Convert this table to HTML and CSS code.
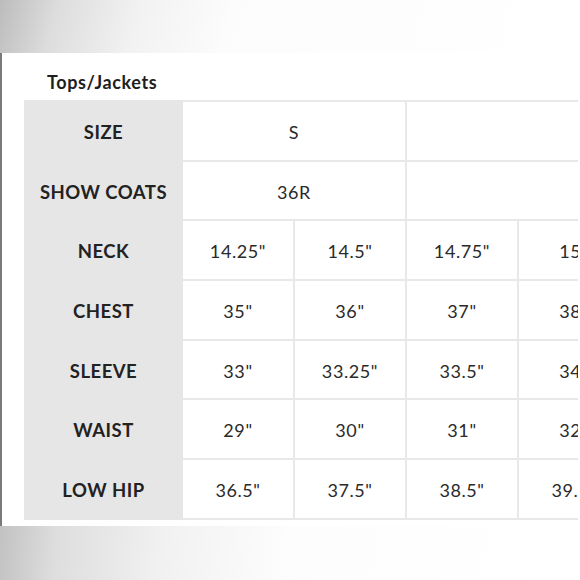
FILE: index.html
```html
<!DOCTYPE html>
<html>
<head>
<meta charset="utf-8">
<link rel="stylesheet" href="styles.css">
</head>
<body>
<div class="band band-top"></div>
<div class="panel">
  <h2 class="title">Tops/Jackets</h2>
  <div class="clip">
    <table class="chart">
      <colgroup>
        <col class="c-label"><col class="c-val"><col class="c-val"><col class="c-val"><col class="c-val">
      </colgroup>
      <tr><th>SIZE</th><td colspan="2">S</td><td colspan="2"></td></tr>
      <tr><th>SHOW COATS</th><td colspan="2">36R</td><td colspan="2"></td></tr>
      <tr><th>NECK</th><td>14.25"</td><td>14.5"</td><td>14.75"</td><td>15"</td></tr>
      <tr><th>CHEST</th><td>35"</td><td>36"</td><td>37"</td><td>38"</td></tr>
      <tr><th>SLEEVE</th><td>33"</td><td>33.25"</td><td>33.5"</td><td>34"</td></tr>
      <tr><th>WAIST</th><td>29"</td><td>30"</td><td>31"</td><td>32"</td></tr>
      <tr><th>LOW HIP</th><td>36.5"</td><td>37.5"</td><td>38.5"</td><td>39.5"</td></tr>
    </table>
  </div>
</div>
<div class="band band-bottom"></div>
</body>
</html>
```
FILE: styles.css
```css
html, body {
  margin: 0;
  padding: 0;
  background: #fff;
}
body {
  width: 580px;
  height: 580px;
  overflow: hidden;
  font-family: Lato, "Open Sans", sans-serif;
  color: #222;
}
.band {
  width: 580px;
}
.band-top {
  height: 53px;
  background: linear-gradient(105deg, #bcbcbc 0%, #dddddd 10%, #f2f2f2 24%, #fcfcfc 40%, #fff 100%);
}
.band-bottom {
  height: 54px;
  background: linear-gradient(95deg, #c2c2c2 0%, #dedede 10%, #f1f1f1 28%, #fdfdfd 50%, #fff 100%);
}
.panel {
  height: 473px;
  background: #fff;
  border-left: 2px solid #7a7a7a;
  padding-left: 22px;
  box-sizing: border-box;
}
.title {
  margin: 0;
  padding: 17px 0 0 23px;
  height: 30px;
  font-size: 18px;
  font-weight: 700;
  letter-spacing: 0.6px;
  line-height: 24px;
  color: #1e1e1e;
}
.clip {
  width: 554px;
  overflow: hidden;
}
.chart {
  table-layout: fixed;
  width: 605px;
  border-collapse: collapse;
}
.c-label { width: 157px; }
.c-val { width: 112px; }
.chart tr {
  height: 59.7px;
}
.chart th {
  background: #e6e6e6;
  border: 2px solid #e6e6e6;
  font-size: 18.5px;
  font-weight: 700;
  letter-spacing: 0.5px;
  color: #222;
  text-align: center;
  padding: 2px 0 0;
}
.chart td {
  border: 2px solid #e8e8e8;
  font-size: 18px;
  font-weight: 400;
  letter-spacing: 0.6px;
  color: #2a2a2a;
  text-align: center;
  padding: 2px 0 0;
}
```
